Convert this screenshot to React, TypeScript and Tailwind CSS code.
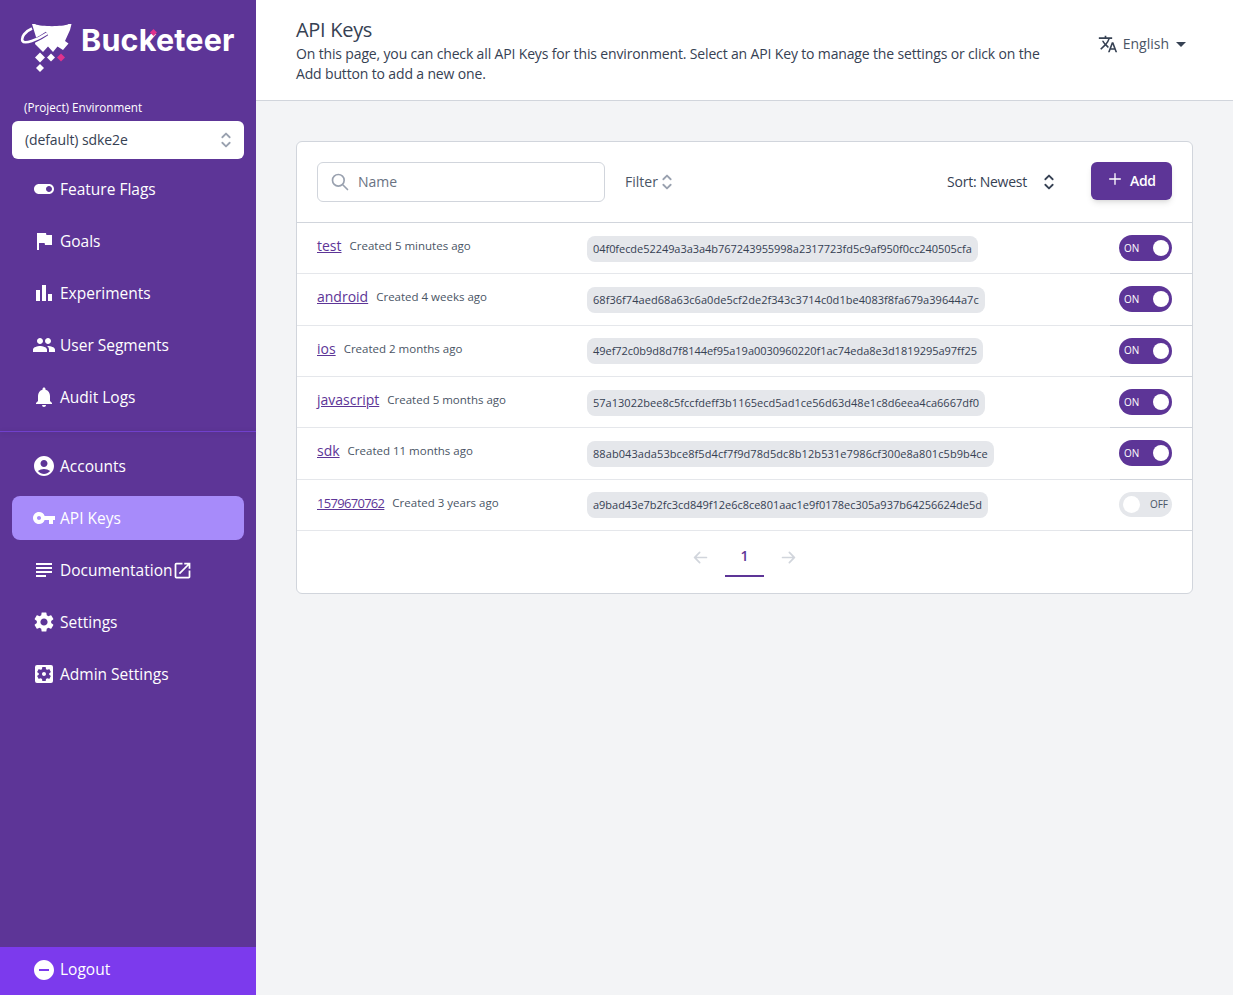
import {
  MdAccountCircle,
  MdArrowDropDown,
  MdBarChart,
  MdFlag,
  MdNotifications,
  MdOpenInNew,
  MdPeople,
  MdRemoveCircle,
  MdSettings,
  MdSettingsApplications,
  MdSubject,
  MdToggleOn,
  MdTranslate,
  MdVpnKey,
} from "react-icons/md";
import { HiArrowLeft, HiArrowRight, HiOutlinePlus, HiOutlineSearch, HiOutlineSelector } from "react-icons/hi";

const font = "font-['Open_Sans','Noto_Sans',sans-serif]";

const topNav = [
  { label: "Feature Flags", icon: MdToggleOn },
  { label: "Goals", icon: MdFlag },
  { label: "Experiments", icon: MdBarChart },
  { label: "User Segments", icon: MdPeople },
  { label: "Audit Logs", icon: MdNotifications },
];

const bottomNav = [
  { label: "Accounts", icon: MdAccountCircle },
  { label: "API Keys", icon: MdVpnKey, active: true },
  { label: "Documentation", icon: MdSubject, external: true },
  { label: "Settings", icon: MdSettings },
  { label: "Admin Settings", icon: MdSettingsApplications },
];

// keyFit nudges each key to the width it has in the design font
const apiKeys = [
  { name: "test", created: "Created 5 minutes ago", key: "04f0fecde52249a3a3a4b767243955998a2317723fd5c9af950f0cc240505cfa", keyFit: "tracking-[-0.05px]", on: true },
  { name: "android", created: "Created 4 weeks ago", key: "68f36f74aed68a63c6a0de5cf2de2f343c3714c0d1be4083f8fa679a39644a7c", keyFit: "tracking-[0.05px]", on: true },
  { name: "ios", created: "Created 2 months ago", key: "49ef72c0b9d8d7f8144ef95a19a0030960220f1ac74eda8e3d1819295a97ff25", keyFit: "tracking-[-0.03px]", on: true },
  { name: "javascript", created: "Created 5 months ago", key: "57a13022bee8c5fccfdeff3b1165ecd5ad1ce56d63d48e1c8d6eea4ca6667df0", keyFit: "tracking-[0.02px]", on: true },
  { name: "sdk", created: "Created 11 months ago", key: "88ab043ada53bce8f5d4cf7f9d78d5dc8b12b531e7986cf300e8a801c5b9b4ce", keyFit: "tracking-[0.08px]", on: true },
  { name: "1579670762", created: "Created 3 years ago", key: "a9bad43e7b2fc3cd849f12e6c8ce801aac1e9f0178ec305a937b64256624de5d", keyFit: "tracking-[-0.02px]", nameFit: "text-[13px] tracking-[-0.7px]", on: false },
];

function Logo() {
  return (
    <div className="relative flex h-[92px] items-start pl-5 pt-5">
      <svg width="54" height="54" viewBox="20 20 54 54" className="shrink-0">
        <path d="M32 24L71.5 24L70 30L65 41L68.5 43.5L63 50L57.5 46.5L53 52L48 46.5L43 52L35 44L36 37Z" fill="#fff" />
        <path d="M35 24.3C42 22.8 62 22.8 68.5 24.3C62 26.8 42 26.8 35 24.3Z" fill="#5d3597" />
        <path d="M25 42.5C30 43 39 39 47 33.5" fill="none" stroke="#5d3597" strokeWidth="4" />
        <path d="M32 28.5C25 31.5 21 37 22.5 41C24.5 44.5 37 40 47 33.5" fill="none" stroke="#fff" strokeWidth="2.6" />
        <path d="M40 52.5L45 57.5L40 62.5L35 57.5Z" fill="#fff" />
        <path d="M40 64L44 68L40 72L36 68Z" fill="#fff" />
        <path d="M51 53.5L55 57.5L51 61.5L47 57.5Z" fill="#fff" />
        <path d="M61 53.5L65 57.5L61 61.5L57 57.5Z" fill="#e0338d" />
      </svg>
      <span className="ml-[7px] mt-[1px] font-['Inter',sans-serif] text-[30.5px] leading-[38px] font-bold tracking-[0.2px] text-white">Bucketeer</span>
      <span className="absolute left-[151px] top-[30px] h-[5px] w-[5px] rotate-45 bg-[#e0338d]" />
    </div>
  );
}

function NavItem({ label, icon: Icon, active, external }: { label: string; icon: typeof MdFlag; active?: boolean; external?: boolean }) {
  return (
    <div className={`mx-3 flex h-11 items-center gap-1 rounded-lg pl-5 text-white ${active ? "bg-[#a78bfa]" : ""}`}>
      <Icon size={24} className="shrink-0" />
      <span className="text-[15.5px] leading-6">{label}</span>
      {external && <MdOpenInNew size={21} className="-ml-[4px]" />}
    </div>
  );
}

function Toggle({ on }: { on: boolean }) {
  if (on) {
    return (
      <div className="flex h-[26px] w-[53px] items-center justify-between rounded-full bg-[#5d3597] pl-[5px] pr-[3px] text-[10px] text-white">
        <span>ON</span>
        <span className="h-4 w-4 rounded-full bg-white" />
      </div>
    );
  }
  return (
    <div className="flex h-[25px] w-[53px] items-center justify-between rounded-full bg-gray-200 pl-[4px] pr-[4px] text-[10px] text-gray-600">
      <span className="h-[17px] w-[17px] rounded-full bg-white" />
      <span>OFF</span>
    </div>
  );
}

export default function App() {
  return (
    <div className={`flex h-[995px] w-full overflow-hidden bg-gray-100 ${font}`}>
      <aside className="flex h-full w-64 shrink-0 flex-col bg-[#5d3597]">
        <Logo />
        <div className="mx-6 text-[11.7px] leading-[30px] text-white">(Project) Environment</div>
        <div className="mx-3 -mt-px flex h-[38px] items-center justify-between rounded-md bg-white pl-[13px] pr-[7px] text-sm tracking-[-0.1px] text-gray-700">
          <span>(default) sdke2e</span>
          <HiOutlineSelector size={22} className="text-gray-400" />
        </div>
        <nav className="mt-2 flex flex-col gap-2">
          {topNav.map((item) => (
            <NavItem key={item.label} {...item} />
          ))}
        </nav>
        <div className="mt-3 h-px bg-[#7040cc] shadow-[0_1px_5px_rgba(0,0,0,0.2)]" />
        <nav className="mt-3 flex flex-col gap-2">
          {bottomNav.map((item) => (
            <NavItem key={item.label} {...item} />
          ))}
        </nav>
        <div className="mt-auto flex h-12 items-center gap-1 bg-[#7c3aed] pb-[2px] pl-8 text-white">
          <MdRemoveCircle size={24} />
          <span className="text-[15.5px]">Logout</span>
        </div>
      </aside>

      <main className="min-w-0 flex-1">
        <header className="flex h-[101px] items-start justify-between border-b border-gray-300 bg-white pl-10 pr-[46px] pt-[18px]">
          <div className="w-[752px]">
            <h1 className="text-xl leading-6 tracking-[-0.3px] text-gray-700">API Keys</h1>
            <p className="mt-[2px] text-sm leading-5 tracking-[-0.15px] text-gray-700">
              On this page, you can check all API Keys for this environment. Select an API Key to manage the settings or click on the Add button to add a new one.
            </p>
          </div>
          <div className="mt-[14px] flex items-center text-sm text-gray-600">
            <MdTranslate size={20} className="text-gray-700" />
            <span className="ml-[5px]">English</span>
            <MdArrowDropDown size={24} className="-mr-[6px] text-gray-700" />
          </div>
        </header>

        <section className="mx-10 mt-10 rounded-md border border-gray-300 bg-white">
          <div className="flex h-[81px] items-start border-b border-gray-300 pl-5 pr-5 pt-5">
            <div className="flex h-10 w-[288px] items-center rounded-md border border-gray-300 pl-3 text-sm text-gray-500">
              <HiOutlineSearch size={20} className="text-gray-400" />
              <span className="ml-[8px]">Name</span>
            </div>
            <div className="ml-5 flex h-10 items-center text-sm text-gray-600">
              <span>Filter</span>
              <HiOutlineSelector size={22} className="-ml-[2px] text-gray-400" />
            </div>
            <div className="ml-auto flex h-10 items-center text-sm tracking-[-0.25px] text-gray-700">
              <span>Sort: Newest</span>
              <HiOutlineSelector size={22} className="ml-[11px] text-gray-700" />
            </div>
            <div className="ml-[31px] flex h-[38px] w-[81px] items-center rounded-md bg-[#5d3597] pl-4 text-sm font-semibold tracking-[-0.3px] text-white shadow-md">
              <HiOutlinePlus size={16} className="-mt-1" />
              <span className="ml-[7px]">Add</span>
            </div>
          </div>

          {apiKeys.map((row, i) => (
            <div key={row.name} className={`relative flex items-center pl-5 pr-5 ${i > 0 ? "h-[51.33px] border-t border-gray-200" : "h-[50.33px]"}`}>
              {i > 0 && <span className="absolute -top-px right-0 h-px w-[82px] bg-gray-300" />}
              <div className="flex w-[270px] shrink-0 -translate-y-[2px] items-baseline">
                <span className={`text-sm text-[#5d3597] underline ${row.nameFit ?? ""}`}>{row.name}</span>
                <span className="ml-2 -translate-y-px text-[11.5px] text-gray-600">{row.created}</span>
              </div>
              <span className={`rounded-lg bg-gray-200 px-[6px] py-[5px] text-[11px] leading-4 text-gray-700 ${i > 0 ? "mt-px" : "mt-[2px]"} ${row.keyFit}`}>{row.key}</span>
              <div className="ml-auto">
                <Toggle on={row.on} />
              </div>
            </div>
          ))}

          <div className="relative flex h-[63px] items-start justify-center border-t border-gray-200 pt-[15px]">
            <span className="absolute -top-px right-0 h-px w-[112px] bg-gray-300" />
            <HiArrowLeft size={17} className="mt-[3px] text-gray-300" />
            <div className="mx-4 flex h-[31px] w-[39px] items-start justify-center border-b-2 border-[#5d3597] text-sm font-semibold text-[#5d3597]">1</div>
            <HiArrowRight size={17} className="mt-[3px] text-gray-300" />
          </div>
        </section>
      </main>
    </div>
  );
}
